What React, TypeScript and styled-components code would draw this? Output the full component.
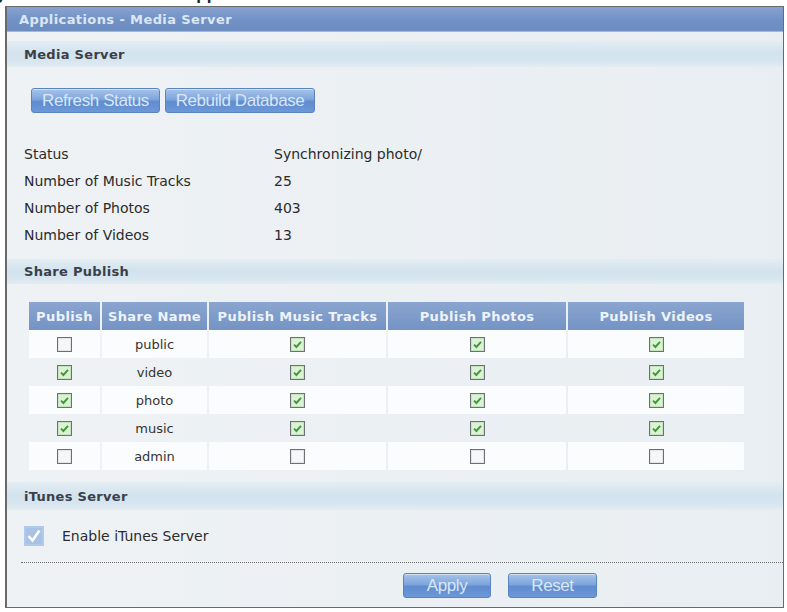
import React from 'react';
import styled, { createGlobalStyle } from 'styled-components';

const GlobalStyle = createGlobalStyle`
  html, body {
    margin: 0;
    padding: 0;
    background: #ffffff;
  }
  body {
    font-family: "DejaVu Sans", Verdana, sans-serif;
    width: 787px;
    height: 612px;
    overflow: hidden;
  }
`;

// only the bottom of the figure caption shows above the panel
const Caption = styled.div`
  height: 6px;
  overflow: hidden;
  display: flex;
  font-family: "Liberation Sans", Arial, sans-serif;
  font-weight: bold;
  font-size: 17px;
  line-height: 20px;
  color: #222;
  white-space: nowrap;
`;

const CaptionPart = styled.span<{ $w?: number; $ml?: number }>`
  display: block;
  margin-top: -15px;
  margin-left: ${p => p.$ml ?? 0}px;
  width: ${p => (p.$w ? `${p.$w}px` : 'auto')};
`;

const Panel = styled.div`
  margin-left: 5px;
  width: 776px;
  border: 1px solid #6a6a6a;
  border-left-width: 2px;
  background: linear-gradient(to right, #eef2f5, #e9eef2);
  padding-bottom: 9px;
`;

const TitleBar = styled.div`
  height: 24px;
  display: flex;
  align-items: center;
  padding-left: 12px;
  background: linear-gradient(to bottom, #86a2d0 0%, #7191c6 55%, #6c8dc0 100%);
  border-bottom: 1px solid #a4b9d1;
  color: #dce7f4;
  font-weight: bold;
  font-size: 13px;
  letter-spacing: 0.4px;
`;

const Band = styled.div<{ $h: number; $mt: number }>`
  margin-top: ${p => p.$mt}px;
  height: ${p => p.$h}px;
  display: flex;
  align-items: center;
  padding-left: 17px;
  background: linear-gradient(to bottom, #e4edf3 0%, #d3e3ee 45%, #d6e5ef 75%, #e3ecf1 100%);
  color: #3a3f48;
  font-weight: bold;
  font-size: 13px;
  letter-spacing: 0.3px;
`;

const ButtonRow = styled.div<{ $mt: number; $pl: number; $gap: number }>`
  margin-top: ${p => p.$mt}px;
  padding-left: ${p => p.$pl}px;
  display: flex;
  gap: ${p => p.$gap}px;
`;

const BlueButton = styled.button<{ $w: number }>`
  width: ${p => p.$w}px;
  height: 25px;
  padding: 0;
  border: 1px solid #5a84bd;
  border-radius: 3px;
  background: linear-gradient(to bottom, #a6c3ea 0%, #7ea6dc 45%, #5f8cd0 55%, #6d98d8 100%);
  box-shadow: inset 0 1px 0 rgba(255, 255, 255, 0.5);
  color: #d9e6f6;
  font-family: "Liberation Sans", Arial, sans-serif;
  font-size: 17px;
  letter-spacing: -0.4px;
  cursor: pointer;
`;

const StatusGrid = styled.div`
  margin-top: 27px;
  padding-left: 17px;
  display: grid;
  grid-template-columns: 250px 1fr;
  grid-auto-rows: 27px;
  align-items: center;
  font-size: 14px;
  color: #2b2b2b;
`;

const Table = styled.table`
  margin-top: 18px;
  margin-left: 20px;
  width: 719px;
  border-collapse: separate;
  border-spacing: 2px 0;
`;

const HeadCell = styled.th<{ $w: number }>`
  width: ${p => p.$w}px;
  height: 28px;
  padding: 0;
  background: linear-gradient(to bottom, #8aa5cf, #7493c4);
  color: #eef3fa;
  font-weight: bold;
  font-size: 13px;
  letter-spacing: 0.4px;
  text-align: center;
  white-space: nowrap;
`;

const Row = styled.tr<{ $light: boolean }>`
  td {
    background: ${p => (p.$light ? '#fbfcfd' : 'transparent')};
  }
`;

const Cell = styled.td`
  height: 28px;
  padding: 0;
  text-align: center;
  vertical-align: middle;
  color: #333;
  font-size: 13px;
`;

const BoxWrap = styled.span`
  display: inline-flex;
  vertical-align: middle;
`;

const CheckBox = ({ on }: { on: boolean }) => (
  <BoxWrap>
    <svg width="15" height="15" viewBox="0 0 15 15">
      <rect x="0.5" y="0.5" width="14" height="14" fill={on ? '#dcf1d6' : '#f6f7f8'} stroke="#6b7175" />
      <rect x="1.5" y="1.5" width="12" height="12" fill="none" stroke={on ? '#c5e4bc' : '#e2e4e6'} />
      {on && <path d="M4 7.6 L6.4 10 L11 4.8" fill="none" stroke="#3f9a3b" strokeWidth="1.9" />}
    </svg>
  </BoxWrap>
);

const EnableRow = styled.div`
  margin-top: 16px;
  padding-left: 17px;
  height: 20px;
  display: flex;
  align-items: center;
  gap: 18px;
  font-size: 14px;
  color: #2b2b2b;
`;

const Dotted = styled.div`
  margin-top: 16px;
  margin-left: 14px;
  border-top: 1px dotted #6c6c6c;
`;

const shares = [
  { name: 'public', p: false, m: true, ph: true, v: true },
  { name: 'video', p: true, m: true, ph: true, v: true },
  { name: 'photo', p: true, m: true, ph: true, v: true },
  { name: 'music', p: true, m: true, ph: true, v: true },
  { name: 'admin', p: false, m: false, ph: false, v: false },
];

const stats = [
  ['Status', 'Synchronizing photo/'],
  ['Number of Music Tracks', '25'],
  ['Number of Photos', '403'],
  ['Number of Videos', '13'],
];

export default function App() {
  return (
    <>
      <GlobalStyle />
      <Caption>
        <CaptionPart $ml={-22} $w={206}>Figure 153</CaptionPart>
        <CaptionPart>Applications &gt; Media Server</CaptionPart>
      </Caption>
      <Panel>
        <TitleBar>Applications - Media Server</TitleBar>
        <Band $mt={9} $h={26}>Media Server</Band>
        <ButtonRow $mt={21} $pl={24} $gap={5}>
          <BlueButton $w={129}>Refresh Status</BlueButton>
          <BlueButton $w={150}>Rebuild Database</BlueButton>
        </ButtonRow>
        <StatusGrid>
          {stats.map(([k, v]) => (
            <React.Fragment key={k}>
              <span>{k}</span>
              <span>{v}</span>
            </React.Fragment>
          ))}
        </StatusGrid>
        <Band $mt={11} $h={25}>Share Publish</Band>
        <Table>
          <thead>
            <tr>
              <HeadCell $w={71}>Publish</HeadCell>
              <HeadCell $w={105}>Share Name</HeadCell>
              <HeadCell $w={177}>Publish Music Tracks</HeadCell>
              <HeadCell $w={178}>Publish Photos</HeadCell>
              <HeadCell $w={176}>Publish Videos</HeadCell>
            </tr>
          </thead>
          <tbody>
            {shares.map((s, i) => (
              <Row key={s.name} $light={i % 2 === 0}>
                <Cell><CheckBox on={s.p} /></Cell>
                <Cell>{s.name}</Cell>
                <Cell><CheckBox on={s.m} /></Cell>
                <Cell><CheckBox on={s.ph} /></Cell>
                <Cell><CheckBox on={s.v} /></Cell>
              </Row>
            ))}
          </tbody>
        </Table>
        <Band $mt={12} $h={28}>iTunes Server</Band>
        <EnableRow>
          <svg width="20" height="20" viewBox="0 0 20 20">
            <rect x="0" y="0" width="20" height="20" fill="#a8c2e6" />
            <rect x="1" y="1" width="18" height="18" fill="none" stroke="#bcd1ee" />
            <path d="M4.5 10 L8.5 14.5 L15.5 4.5" fill="none" stroke="#ffffff" strokeWidth="2.6" />
          </svg>
          <span>Enable iTunes Server</span>
        </EnableRow>
        <Dotted />
        <ButtonRow $mt={10} $pl={396} $gap={17}>
          <BlueButton $w={88}>Apply</BlueButton>
          <BlueButton $w={89}>Reset</BlueButton>
        </ButtonRow>
      </Panel>
    </>
  );
}
